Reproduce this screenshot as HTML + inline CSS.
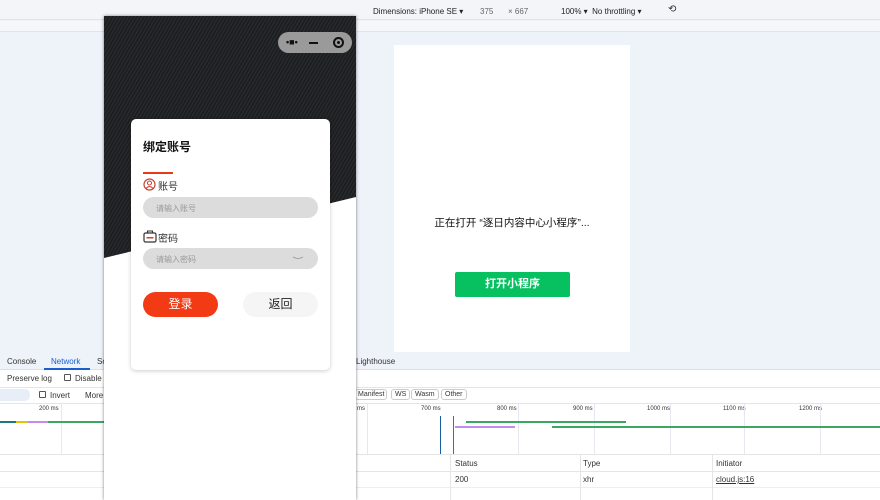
<!DOCTYPE html>
<html><head><meta charset="utf-8"><style>
*{margin:0;padding:0;box-sizing:border-box}
body{width:880px;height:500px;overflow:hidden;background:#eef2f9;font-family:"Liberation Sans","Noto Sans CJK SC",sans-serif;position:relative;font-size:8px;color:#333}
.a{position:absolute}
</style></head><body>
<div class="a" style="left:0;top:0;width:880px;height:20px;background:#f3f5f9;border-bottom:1px solid #e0e4ea"></div>
<div class="a" style="left:373px;top:7px;font-size:8px;color:#222">Dimensions: iPhone SE ▾</div>
<div class="a" style="left:480px;top:7px;color:#666">375</div>
<div class="a" style="left:508px;top:7px;color:#666">× 667</div>
<div class="a" style="left:561px;top:7px;color:#222">100% ▾ &nbsp;No throttling ▾</div>
<div class="a" style="left:668px;top:4px;font-size:10px">⟲</div>
<div class="a" style="left:0;top:21px;width:880px;height:11px;background:#f5f7fb;border-bottom:1px solid #e0e4ea"></div>
<div class="a" style="left:394px;top:45px;width:236px;height:308px;background:#fff"></div>
<div class="a" style="left:394px;top:215px;width:236px;text-align:center;font-size:10.5px;color:#111">正在打开 “逐日内容中心小程序”...</div>
<div class="a" style="left:455px;top:272px;width:115px;height:25px;background:#07c160;color:#fff;font-size:11px;font-weight:bold;text-align:center;line-height:25px;border-radius:2px">打开小程序</div>
<div class="a" style="left:0;top:352px;width:880px;height:148px;background:#fff"></div>
<div class="a" style="left:0;top:352px;width:880px;height:18px;background:#eef2f9;border-bottom:1px solid #dde"></div>
<div class="a" style="left:7px;top:357px">Console</div>
<div class="a" style="left:51px;top:357px;color:#1a5fd0">Network</div>
<div class="a" style="left:44px;top:368px;width:46px;height:2px;background:#1a5fd0"></div>
<div class="a" style="left:97px;top:357px">So</div>
<div class="a" style="left:356px;top:357px">Lighthouse</div>
<div class="a" style="left:0;top:387px;width:880px;border-top:1px solid #e5e5e5"></div>
<div class="a" style="left:7px;top:374px">Preserve log</div>
<div class="a" style="left:64px;top:374px;width:7px;height:7px;border:1px solid #555;border-radius:1px"></div>
<div class="a" style="left:75px;top:374px">Disable</div>
<div class="a" style="left:0;top:389px;width:30px;height:12px;background:#e8eef8;border-radius:0 5px 5px 0"></div>
<div class="a" style="left:39px;top:391px;width:7px;height:7px;border:1px solid #555;border-radius:1px"></div>
<div class="a" style="left:50px;top:391px">Invert</div>
<div class="a" style="left:85px;top:391px">More</div>
<div class="a" style="left:355px;top:389px;border:1px solid #ccc;border-radius:3px;padding:1px 2px;font-size:7px">Manifest</div>
<div class="a" style="left:391px;top:389px;border:1px solid #ccc;border-radius:3px;padding:1px 3px;font-size:7px">WS</div>
<div class="a" style="left:411px;top:389px;border:1px solid #ccc;border-radius:3px;padding:1px 3px;font-size:7px">Wasm</div>
<div class="a" style="left:441px;top:389px;border:1px solid #ccc;border-radius:3px;padding:1px 3px;font-size:7px">Other</div>
<div class="a" style="left:0;top:403px;width:880px;border-top:1px solid #e5e5e5"></div>
<div class="a" style="left:39px;top:406px;font-size:6px">200 ms</div>
<div class="a" style="left:61px;top:404px;width:1px;height:50px;background:#e5e8f0"></div>
<div class="a" style="left:357px;top:406px;font-size:6px">ms</div>
<div class="a" style="left:421px;top:406px;font-size:6px">700 ms</div>
<div class="a" style="left:497px;top:406px;font-size:6px">800 ms</div>
<div class="a" style="left:573px;top:406px;font-size:6px">900 ms</div>
<div class="a" style="left:647px;top:406px;font-size:6px">1000 ms</div>
<div class="a" style="left:723px;top:406px;font-size:6px">1100 ms</div>
<div class="a" style="left:799px;top:406px;font-size:6px">1200 ms</div>
<div class="a" style="left:367px;top:404px;width:1px;height:50px;background:#e5e8f0"></div>
<div class="a" style="left:518px;top:404px;width:1px;height:50px;background:#e5e8f0"></div>
<div class="a" style="left:594px;top:404px;width:1px;height:50px;background:#e5e8f0"></div>
<div class="a" style="left:670px;top:404px;width:1px;height:50px;background:#e5e8f0"></div>
<div class="a" style="left:744px;top:404px;width:1px;height:50px;background:#e5e8f0"></div>
<div class="a" style="left:820px;top:404px;width:1px;height:50px;background:#e5e8f0"></div>
<div class="a" style="left:0;top:421px;width:16px;height:2px;background:#1a7a80"></div>
<div class="a" style="left:16px;top:421px;width:12px;height:2px;background:#e6c300"></div>
<div class="a" style="left:28px;top:421px;width:20px;height:2px;background:#c58be8"></div>
<div class="a" style="left:48px;top:421px;width:57px;height:2px;background:#3aa860"></div>
<div class="a" style="left:440px;top:416px;width:1px;height:38px;background:#1a5fa0"></div>
<div class="a" style="left:453px;top:416px;width:1px;height:38px;background:#d33"></div>
<div class="a" style="left:466px;top:421px;width:160px;height:2px;background:#3aa860"></div>
<div class="a" style="left:455px;top:426px;width:60px;height:2px;background:#c58be8"></div>
<div class="a" style="left:552px;top:426px;width:328px;height:2px;background:#3aa860"></div>
<div class="a" style="left:0;top:454px;width:880px;border-top:1px solid #e5e5e5"></div>
<div class="a" style="left:0;top:471px;width:880px;border-top:1px solid #e5e5e5"></div>
<div class="a" style="left:0;top:487px;width:880px;border-top:1px solid #eee"></div>
<div class="a" style="left:450px;top:455px;width:1px;height:45px;background:#e5e5e5"></div>
<div class="a" style="left:580px;top:455px;width:1px;height:45px;background:#e5e5e5"></div>
<div class="a" style="left:712px;top:455px;width:1px;height:45px;background:#e5e5e5"></div>
<div class="a" style="left:455px;top:459px">Status</div>
<div class="a" style="left:583px;top:459px">Type</div>
<div class="a" style="left:716px;top:459px">Initiator</div>
<div class="a" style="left:455px;top:475px">200</div>
<div class="a" style="left:583px;top:475px">xhr</div>
<div class="a" style="left:716px;top:475px;text-decoration:underline">cloud.js:16</div>
<div class="a" style="left:104px;top:16px;width:252px;height:484px;background:#fff;box-shadow:0 0 3px rgba(0,0,0,.5);overflow:hidden">
<svg class="a" style="left:0;top:0" width="252" height="260">
<defs><pattern id="p" width="3" height="3" patternUnits="userSpaceOnUse" patternTransform="rotate(30)"><rect width="3" height="3" fill="#1d1e20"/><rect width="0.8" height="3" fill="#2e3033"/></pattern></defs>
<polygon points="0,0 252,0 252,181 0,242" fill="url(#p)"/>
</svg>
<div class="a" style="left:174px;top:16px;width:74px;height:21px;background:#9a9a9a;border-radius:11px"></div>
<div class="a" style="left:182px;top:21px;color:#111;font-size:9px;font-weight:bold">•■•</div>
<div class="a" style="left:205px;top:26px;width:9px;height:2px;background:#111"></div>
<div class="a" style="left:229px;top:21px;width:11px;height:11px;border:2px solid #111;border-radius:50%"></div>
<div class="a" style="left:233px;top:25px;width:3px;height:3px;background:#111;border-radius:50%"></div>
</div>
<div class="a" style="left:131px;top:119px;width:199px;height:251px;background:#fff;border-radius:5px;box-shadow:0 1px 4px rgba(0,0,0,.2)"></div>
<div class="a" style="left:143px;top:138px;font-size:12px;font-weight:bold;color:#111">绑定账号</div>
<div class="a" style="left:143px;top:172px;width:30px;height:2px;background:#e8391a"></div>
<svg class="a" style="left:143px;top:178px" width="13" height="13"><circle cx="6.5" cy="6.5" r="5.5" fill="none" stroke="#c43" stroke-width="1.2"/><circle cx="6.5" cy="5" r="2" fill="none" stroke="#c43" stroke-width="1.1"/><path d="M3 10.5 Q6.5 6.5 10 10.5" fill="none" stroke="#c43" stroke-width="1.1"/></svg>
<div class="a" style="left:158px;top:178px;font-size:10px;color:#333">账号</div>
<div class="a" style="left:143px;top:197px;width:175px;height:21px;background:#dcdcdc;border-radius:11px;font-size:8px;color:#999;padding:6px 0 0 13px">请输入账号</div>
<svg class="a" style="left:143px;top:230px" width="14" height="13"><rect x="1" y="3" width="12" height="9" rx="1.5" fill="none" stroke="#333" stroke-width="1.2"/><path d="M4.5 3 V1 H9.5 V3" fill="none" stroke="#333" stroke-width="1.1"/><rect x="3.5" y="7" width="7" height="1.5" fill="#c43"/></svg>
<div class="a" style="left:158px;top:230px;font-size:10px;color:#333">密码</div>
<div class="a" style="left:143px;top:248px;width:175px;height:21px;background:#dcdcdc;border-radius:11px;font-size:8px;color:#999;padding:6px 0 0 13px">请输入密码</div>
<svg class="a" style="left:292px;top:255px" width="12" height="6"><path d="M1 2 Q6 5 11 2" fill="none" stroke="#999" stroke-width="0.8"/></svg>
<div class="a" style="left:143px;top:292px;width:75px;height:25px;background:#f23a14;border-radius:13px;color:#fff;font-size:12px;text-align:center;line-height:25px">登录</div>
<div class="a" style="left:243px;top:292px;width:75px;height:25px;background:#f5f5f5;border-radius:13px;color:#222;font-size:12px;text-align:center;line-height:25px">返回</div>
</body></html>
